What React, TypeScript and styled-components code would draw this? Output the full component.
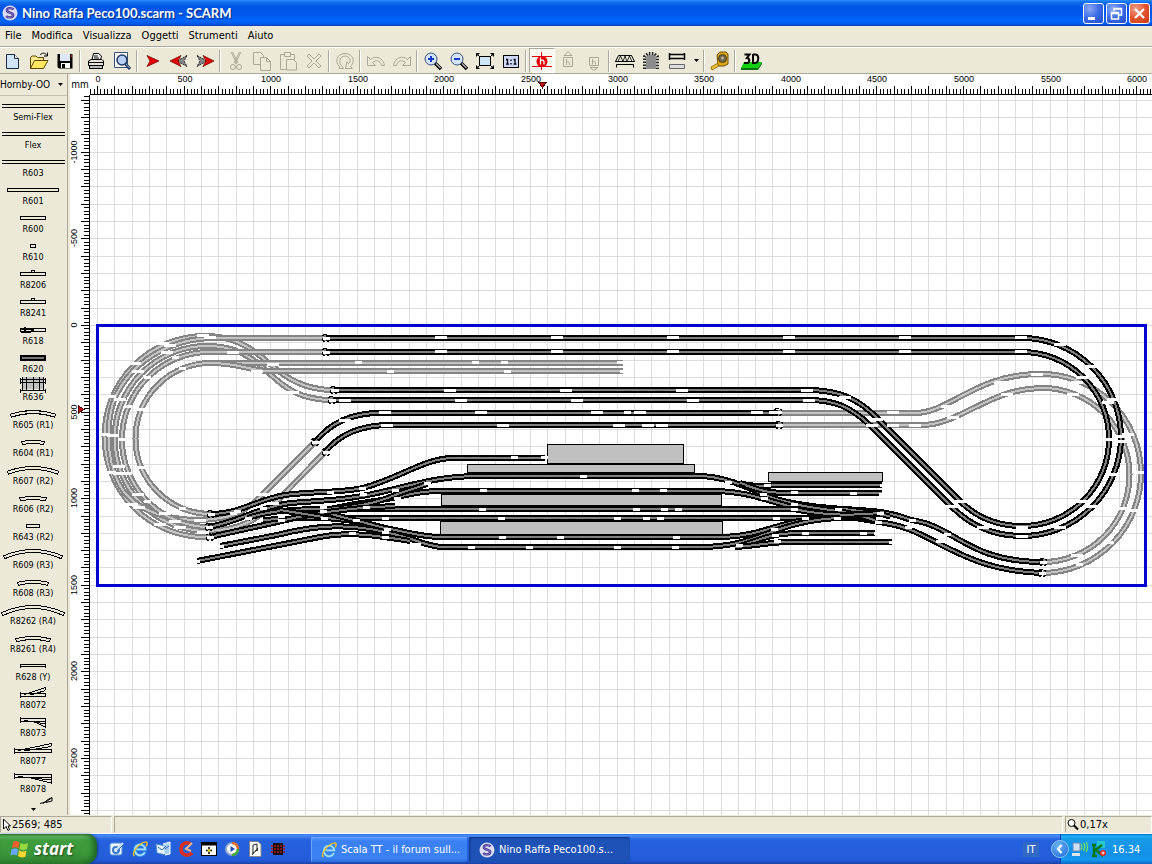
import React from "react";
import styled, { createGlobalStyle, css } from "styled-components";

const uiFont = `"DejaVu Sans Condensed", "Liberation Sans", sans-serif`;

const GlobalStyle = createGlobalStyle`
  * { box-sizing: border-box; }
  body { margin: 0; background: #ece9d8; font-family: ${uiFont}; font-size: 10px; color: #000; overflow: hidden; }
  button, select { font: inherit; color: inherit; }
  svg { flex: none; }
`;

const Window = styled.div`
  display: flex;
  flex-direction: column;
  height: 100vh;
  background: #ece9d8;
`;

/* ---------- title bar ---------- */

const TitleBar = styled.header`
  display: flex;
  align-items: center;
  gap: 4px;
  height: 26px;
  flex: none;
  padding: 0 2px;
  background: linear-gradient(#2a8cff 0, #0a68ec 3px, #0055e5 7px, #0058ea 14px, #0066ff 21px, #0057e4 24px, #0040c0 26px);
`;

const Title = styled.h1`
  flex: 1;
  margin: 0;
  font: bold 13px/20px Lato, "Open Sans", sans-serif;
  color: #fff;
  text-shadow: 1px 1px 1px #0a2a80;
`;

const CaptionButtons = styled.div`
  display: flex;
  gap: 2px;
`;

const CaptionButton = styled.button<{ $close?: boolean }>`
  width: 21px;
  height: 21px;
  padding: 0;
  border: 1px solid #fff;
  border-radius: 3px;
  background: ${(p) =>
    p.$close
      ? "radial-gradient(circle at 30% 25%, #f0a08a, #e2532c 50%, #c83c14)"
      : "radial-gradient(circle at 30% 25%, #8aa8f4, #3b6ae6 50%, #1e4cd0)"};
  svg { display: block; }
`;

/* ---------- menu ---------- */

const MenuBar = styled.nav`
  display: flex;
  gap: 10px;
  height: 21px;
  flex: none;
  padding: 0 5px;
  align-items: center;
  border-bottom: 1px solid #aca899;
`;

const MenuItem = styled.button`
  padding: 0;
  border: 0;
  background: none;
  font-size: 11px;
  line-height: 16px;
`;

/* ---------- toolbar ---------- */

const ToolBar = styled.div`
  display: flex;
  align-items: center;
  height: 27px;
  flex: none;
  border-top: 1px solid #fff;
  border-bottom: 1px solid #aca899;
`;

const ToolButton = styled.button<{ $pressed?: boolean }>`
  display: flex;
  align-items: center;
  justify-content: center;
  width: 26px;
  height: 25px;
  padding: 0;
  border: 1px solid transparent;
  background: none;
  ${(p) =>
    p.$pressed &&
    css`
      background: #f8f7f0;
      border-color: #aca899 #fff #fff #aca899;
    `}
`;

const DropButton = styled(ToolButton)`
  width: 12px;
`;

const ToolSeparator = styled.span`
  width: 2px;
  height: 22px;
  margin: 0 2px 0 1px;
  border-left: 1px solid #aca899;
  border-right: 1px solid #fff;
`;

/* ---------- work area ---------- */

const WorkArea = styled.main`
  display: grid;
  grid-template-columns: 68px 22px minmax(0, 1fr);
  grid-template-rows: 21px minmax(0, 1fr);
  flex: 1;
  min-height: 0;
`;

const Palette = styled.aside`
  grid-row: 1 / 3;
  display: flex;
  flex-direction: column;
  min-height: 0;
  border-right: 1px solid #aca899;
`;

const LibraryRow = styled.div`
  display: grid;
  align-items: center;
  flex: none;
  height: 22px;
  border-bottom: 1px solid #c5c2b3;
  > * { grid-area: 1 / 1; }
  > svg { justify-self: end; margin-right: 4px; pointer-events: none; }
`;

const LibrarySelect = styled.select`
  appearance: none;
  height: 20px;
  width: 100%;
  padding: 0;
  border: 0;
  border-radius: 0;
  background: none;
`;

const PartList = styled.ul`
  flex: 1;
  min-height: 0;
  margin: 0;
  padding: 0;
  overflow: hidden;
  list-style: none;
`;

const PartButton = styled.button`
  display: block;
  width: 66px;
  height: 28px;
  padding: 0;
  border: 0;
  background: none;
  font-size: 9px;
  line-height: 10px;
  text-align: center;
  svg { display: block; overflow: visible; }
`;

const ScrollDown = styled.button`
  display: flex;
  justify-content: center;
  height: 7px;
  padding: 0;
  border: 0;
  background: none;
`;

const UnitCorner = styled.div`
  display: flex;
  align-items: center;
  justify-content: center;
  border-left: 2px solid #ece9d8;
  background: #fff;
`;

const HorizontalRuler = styled.div`
  overflow: hidden;
  background: #fff;
  svg { display: block; width: 100%; height: 21px; }
`;

const VerticalRuler = styled.div`
  overflow: hidden;
  border-left: 2px solid #ece9d8;
  background: #fff;
  svg { display: block; width: 20px; height: 100%; }
`;

const Sheet = styled.div`
  overflow: hidden;
  background: #fff;
  svg { display: block; width: 100%; height: 100%; }
`;

const RulerText = styled.text`
  font: 9px "Liberation Sans", sans-serif;
  text-anchor: middle;
`;

/* ---------- status bar ---------- */

const StatusBar = styled.footer`
  display: grid;
  grid-template-columns: 112px minmax(0, 1fr) 87px;
  gap: 2px;
  height: 19px;
  flex: none;
  padding-top: 1px;
  border-bottom: 1px solid #fff;
`;

const StatusCell = styled.div`
  display: flex;
  align-items: center;
  gap: 1px;
  padding-left: 1px;
  border: 1px solid;
  border-color: #aca899 #fff #ece9d8 #aca899;
  font-size: 11px;
`;

/* ---------- taskbar ---------- */

const TaskBar = styled.div`
  display: flex;
  height: 30px;
  flex: none;
  background: linear-gradient(#1f5fd8 0, #4a92f6 1px, #3a7bee 3px, #2560de 6px, #245edb 22px, #2158d4 27px, #1941a5 30px);
`;

const StartButton = styled.button`
  display: flex;
  align-items: center;
  gap: 5px;
  width: 97px;
  margin-right: 8px;
  padding: 0 0 1px 10px;
  border: 0;
  border-radius: 0 10px 12px 0;
  background: linear-gradient(#2f7a2f 0, #66b866 2px, #3f9e3f 6px, #3a963a 20px, #2f802f 30px);
  box-shadow: inset -4px 0 5px #1f6a24, 1px 0 2px #143a90;
  font: italic bold 17px/24px "Open Sans", "Liberation Sans", sans-serif;
  color: #fff;
  text-shadow: 1px 1px 2px #1c4a1c;
`;

const QuickLaunch = styled.div`
  display: flex;
  align-items: center;
  width: 206px;
  flex: none;
`;

const QuickButton = styled.button`
  display: flex;
  align-items: center;
  justify-content: center;
  width: 23px;
  height: 24px;
  padding: 0;
  border: 0;
  background: none;
`;

const Tasks = styled.div`
  display: flex;
  flex: 1;
  gap: 2px;
  padding: 3px 0 2px;
`;

const TaskButton = styled.button<{ $active?: boolean }>`
  display: flex;
  align-items: center;
  gap: 4px;
  width: ${(p) => (p.$active ? 161 : 156)}px;
  padding: 0 10px;
  border: 0;
  border-radius: 2px;
  color: #fff;
  font-size: 11px;
  white-space: nowrap;
  background: ${(p) => (p.$active ? "#1e52b7" : "linear-gradient(#5a9bfb, #3c81f3 4px, #3c81f3 21px, #2f6fe0)")};
  box-shadow: ${(p) => (p.$active ? "inset 1px 1px 2px #0e3588" : "inset 1px 1px 0 #6aa6fb")};
`;

const Language = styled.button`
  align-self: center;
  width: 16px;
  margin-right: 21px;
  padding: 0;
  border: 0;
  background: #316ac5;
  color: #fff;
  font-size: 11px;
  line-height: 15px;
`;

const Tray = styled.div`
  display: flex;
  align-items: center;
  width: 92px;
  flex: none;
  gap: 2px;
  border-left: 1px solid #1042af;
  background: linear-gradient(#0c66c0 0, #1cb0f8 2px, #189ae8 5px, #1290e8 20px, #1599f0 26px, #0c66c0 30px);
  color: #fff;
  font-size: 11px;
`;

const TrayToggle = styled.button`
  width: 18px;
  height: 18px;
  margin-left: -10px;
  padding: 0;
  border: 1px solid #8cc8f4;
  border-radius: 50%;
  background: radial-gradient(circle at 40% 30%, #6cb4f6, #1a68d8);
  svg { display: block; }
`;

const Clock = styled.time`
  margin-left: 3px;
`;

/* ---------- icons ---------- */

const Svg = ({ w = 20, h = 20, children }: { w?: number; h?: number; children: React.ReactNode }) => (
  <svg width={w} height={h} viewBox={`0 0 ${w} ${h}`} fill="none" aria-hidden="true">
    {children}
  </svg>
);

const ScarmLogo = ({ size = 16 }: { size?: number }) => (
  <svg width={size} height={size} viewBox="0 0 16 16" fill="none" aria-hidden="true">
    <circle cx="8" cy="8" r="7.5" fill="#dcdcf4" />
    <path d="M11.5 4.5C10 2.6 5 2.6 4.8 5.3C4.7 8.2 11.4 7.2 11.2 10.2C11 13 5.8 13 4.3 11" stroke="#3a2c8c" strokeWidth="2.4" />
    <path d="M11.5 4.5C10 2.6 5 2.6 4.8 5.3C4.7 8.2 11.4 7.2 11.2 10.2C11 13 5.8 13 4.3 11" stroke="#c8b0e8" strokeWidth="0.6" />
  </svg>
);

const DropArrow = () => (
  <Svg w={5} h={3}>
    <path d="M0 0H5L2.5 3Z" fill="#000" />
  </Svg>
);

const Magnifier = ({ sign }: { sign: "+" | "-" }) => (
  <Svg>
    <path d="M12 12L18 18" stroke="#000" strokeWidth="3.5" />
    <path d="M13 12.5L17.5 17" stroke="#a8a8a8" strokeWidth="1.5" />
    <circle cx="8" cy="8" r="6" fill="#d4e4fc" stroke="#38507c" />
    <path d={sign === "+" ? "M5 8H11M8 5V11" : "M5 8H11"} stroke="#1838c8" strokeWidth="2" />
  </Svg>
);

const RedArrow = () => (
  <Svg>
    <path d="M4 4.5L16 10L4 15.5L7 10Z" fill="#e80000" stroke="#600" strokeWidth="0.7" />
  </Svg>
);

const PairArrows = ({ flip }: { flip?: boolean }) => (
  <Svg>
    <g transform={flip ? "matrix(-1 0 0 1 20 0)" : undefined}>
      <path d="M18 4.5L8 10L18 15.5L15 10Z" fill="#888" stroke="#222" strokeDasharray="2 1" />
      <path d="M12 4.5L1 10L12 15.5L9 10Z" fill="#e80000" stroke="#600" strokeWidth="0.7" />
    </g>
  </Svg>
);

const muted = "#aca899";

type Tool = { name: string; icon?: React.ReactNode; sep?: boolean; pressed?: boolean; drop?: boolean };

const sep: Tool = { name: "", sep: true };

const tools: Tool[] = [
  {
    name: "New",
    icon: (
      <Svg>
        <path d="M3.5 3.5H11.5L15.5 7.5V17.5H3.5Z" fill="#d0e4fc" stroke="#1c2c44" />
        <path d="M11.5 3.5V7.5H15.5" fill="#fff" stroke="#1c2c44" />
      </Svg>
    ),
  },
  {
    name: "Open",
    icon: (
      <Svg>
        <path d="M1.5 17.5V6.5L3 5H7L8.5 6.5H14.5V9.5" fill="#fbe88c" stroke="#5c4800" />
        <path d="M1.5 17.5L5.5 9.5H19L14.5 17.5Z" fill="#ffe860" stroke="#5c4800" />
        <path d="M11 4C13 1.5 16 1.5 18 4.5M18.500 1.500V5H15" stroke="#000" />
      </Svg>
    ),
  },
  {
    name: "Save",
    icon: (
      <Svg>
        <path d="M2.5 3H17.5V17.5H4L2.5 16Z" fill="#000" />
        <rect x="5" y="3" width="10" height="7" fill="#dce8f8" />
        <rect x="6" y="12" width="9" height="5" fill="#fff" />
        <rect x="7" y="13" width="3" height="4" fill="#000" />
        <rect x="16" y="4" width="1" height="2" fill="#d02020" />
      </Svg>
    ),
  },
  sep,
  {
    name: "Print",
    icon: (
      <Svg>
        <path d="M6 9L7.5 2.5H12.5L15.5 5L14.5 9" fill="#fff" stroke="#000" />
        <path d="M8 5H12M8 7H13" stroke="#000" />
        <path d="M2.5 10L5 8.5H16L17.5 10V14.5H2.5Z" fill="#e8e4d8" stroke="#000" />
        <path d="M2 11.5H18" stroke="#000" />
        <rect x="3.5" y="14.5" width="13" height="3" fill="#bbb" stroke="#000" />
      </Svg>
    ),
  },
  {
    name: "Preview",
    icon: (
      <Svg>
        <path d="M2.5 1.5H15.500V16.500H2.500Z" fill="#fff" stroke="#385078" />
        <circle cx="10" cy="9" r="5" fill="#b8d0f4" stroke="#203860" strokeWidth="1.5" />
        <path d="M13.5 13L18 18" stroke="#203860" strokeWidth="3" />
        <path d="M14 13L17.5 17" stroke="#88a4cc" />
      </Svg>
    ),
  },
  sep,
  { name: "Start", icon: <RedArrow /> },
  { name: "Previous", icon: <PairArrows /> },
  { name: "Next", icon: <PairArrows flip /> },
  sep,
  {
    name: "Cut",
    icon: (
      <Svg>
        <path d="M5 1L11 13M15 1L9 13M6.500 1L12 12M13.500 1L8 12" stroke={muted} />
        <circle cx="7" cy="16" r="2.5" stroke={muted} />
        <circle cx="13" cy="16" r="2.5" stroke={muted} />
      </Svg>
    ),
  },
  {
    name: "Copy",
    icon: (
      <Svg>
        <path d="M1.5 1.5H8.5L11.5 4.5V13.5H1.5Z" fill="#ece9d8" stroke={muted} />
        <path d="M8.5 6.5H14.5L18.5 10.5V19.5H8.5Z" fill="#ece9d8" stroke={muted} />
        <path d="M14.5 6.5V10.5H18.5" stroke={muted} />
      </Svg>
    ),
  },
  {
    name: "Paste",
    icon: (
      <Svg>
        <path d="M2.5 3.5H16.5V18.5H2.5Z" stroke={muted} />
        <path d="M6.5 1.5H12.5V5.5H6.5Z" fill="#ece9d8" stroke={muted} />
        <path d="M8.5 8.5H15.5L18.5 11.5V19H8.5Z" fill="#ece9d8" stroke={muted} />
      </Svg>
    ),
  },
  {
    name: "Delete",
    icon: (
      <Svg>
        <path d="M3 5L5 3L10 8L15 3L17 5L12 10L17 15L15 17L10 12L5 17L3 15L8 10Z" stroke={muted} />
      </Svg>
    ),
  },
  sep,
  {
    name: "Rotate",
    icon: (
      <Svg>
        <path d="M4 17.5H8.500L7.500 15.500C3.500 13.500 3.500 5.500 10 5C15.500 5.500 16.500 11 13.500 13L12 10.500L10.500 17.500H17.500L15.500 15.500C20.500 11 18.500 2.500 10 2.500C1.500 2.500 -0.500 11.500 4.500 15.500Z" stroke={muted} />
      </Svg>
    ),
  },
  sep,
  {
    name: "Undo",
    icon: (
      <Svg>
        <path d="M1.5 5.5V14.5H9.5L6.5 11.5C10 8.5 14 9 15.5 14.5H18.5C17.5 6.5 9 4 4.5 8.5Z" stroke={muted} />
      </Svg>
    ),
  },
  {
    name: "Redo",
    icon: (
      <Svg>
        <path d="M18.5 5.5V14.5H10.5L13.5 11.5C10 8.5 6 9 4.5 14.5H1.5C2.5 6.5 11 4 15.5 8.5Z" stroke={muted} />
      </Svg>
    ),
  },
  sep,
  { name: "Zoom in", icon: <Magnifier sign="+" /> },
  { name: "Zoom out", icon: <Magnifier sign="-" /> },
  {
    name: "Fit",
    icon: (
      <Svg>
        <rect x="4.5" y="5.5" width="11" height="9" fill="#cfe4f4" stroke="#000" />
        <path d="M1 2L5 2L1 6ZM19 2L15 2L19 6ZM1 18L5 18L1 14ZM19 18L15 18L19 14Z" fill="#000" />
        <path d="M2 3L5 6M18 3L15 6M2 17L5 14M18 17L15 14" stroke="#000" />
      </Svg>
    ),
  },
  {
    name: "Actual size",
    icon: (
      <Svg>
        <rect x="2.5" y="4.5" width="15" height="12" fill="#cfd8fc" stroke="#000" />
        <path d="M5 8.5H6.5V13M12.500 8.500H14V13M5 13.200H8M12.500 13.200H15.500" stroke="#000" strokeWidth="1.3" />
        <path d="M10 8.5V10M10 12V13.500" stroke="#000" strokeWidth="1.3" />
      </Svg>
    ),
  },
  sep,
  {
    name: "Heights",
    pressed: true,
    icon: (
      <Svg>
        <path d="M0 5.5H20M0 15.5H20M9.5 1V19" stroke="#e80000" />
        <circle cx="10" cy="10.5" r="5.5" fill="#e80000" />
        <path d="M8.5 6.5V13.5M8.500 10C10 8.500 12 9 12 11V13.500" stroke="#fff" strokeWidth="1.3" />
      </Svg>
    ),
  },
  {
    name: "Raise",
    icon: (
      <Svg>
        <path d="M10 0.5L14 4.5H6ZM5.500 6.500H14.500V15.500H5.500Z" stroke={muted} />
        <path d="M8.5 8V14M8.500 11.500C10 10 11.500 10.500 11.500 14" stroke={muted} />
      </Svg>
    ),
  },
  {
    name: "Lower",
    icon: (
      <Svg>
        <path d="M10 19.5L14 16.5H6ZM5.500 6.500H14.500V14.500H5.500Z" stroke={muted} />
        <path d="M8.5 8V13.5M8.500 11C10 9.500 11.500 10 11.500 13.500" stroke={muted} />
      </Svg>
    ),
  },
  sep,
  {
    name: "Bridge",
    icon: (
      <Svg>
        <path d="M0 10.5H20M1.500 16.500V13.500H18.500V16.500M0.500 10.500L3.500 4.500H16.500L19.500 10.500" stroke="#000" />
        <path d="M3 10.5L5.500 5L8 10.500L10 5L12 10.500L14.500 5L17 10.500" stroke="#000" strokeWidth="0.8" />
      </Svg>
    ),
  },
  {
    name: "Tunnel",
    icon: (
      <Svg>
        <path d="M5 18V6C6 3 14 3 15 6V18Z" fill="#8c8c8c" />
        <path d="M3.5 18V5.500L7 2.500H13L16.500 5.500V18" stroke="#222" strokeWidth="3" strokeDasharray="1.500 1.500" />
      </Svg>
    ),
  },
  {
    name: "Levels",
    icon: (
      <Svg>
        <path d="M2 3.500H18M2 7.500H18M2.500 2V9M17.500 2V9" stroke="#000" strokeWidth="1.500" />
        <path d="M2.5 13.5H17.5V17.5H2.5Z" fill="#ddd" stroke="#666" />
      </Svg>
    ),
  },
  { name: "Level list", drop: true, icon: <DropArrow /> },
  sep,
  {
    name: "Measure",
    icon: (
      <Svg>
        <path d="M7 4L10 1H16L18 3V13L14 15H8Z" fill="#e0a810" stroke="#705000" />
        <circle cx="12.5" cy="7.5" r="4" fill="#706850" stroke="#504010" />
        <circle cx="12.5" cy="7" r="1.5" fill="#b8b098" />
        <path d="M1 16L8 12V15.500L2 19Z" fill="#f0c040" stroke="#a07800" />
      </Svg>
    ),
  },
  sep,
  {
    name: "3D view",
    icon: (
      <Svg w={22}>
        <path d="M1 17L4 11H22L18 17Z" fill="#10d010" />
        <path d="M1 17L18 17L22 11V13L18 19H1Z" fill="#087008" />
        <path d="M4.5 3.500H9.500L7 7C10 7 10 12 7 12H4" stroke="#000" strokeWidth="2" />
        <path d="M13 3V12H15C19 12 19.500 3.500 15.500 3.500H13" stroke="#000" strokeWidth="2" />
      </Svg>
    ),
  },
];

/* ---------- palette of track parts ---------- */

type Shape = "long" | "bar" | "feeder" | "rerail" | "buffer" | "crossing" | "arc" | "bracket" | "left" | "right";
type Part = { label: string; shape: Shape; half: number };

const parts: Part[] = [
  { label: "Semi-Flex", shape: "long", half: 31 },
  { label: "Flex", shape: "long", half: 31 },
  { label: "R603", shape: "long", half: 31 },
  { label: "R601", shape: "bar", half: 26 },
  { label: "R600", shape: "bar", half: 13 },
  { label: "R610", shape: "bar", half: 3 },
  { label: "R8206", shape: "feeder", half: 13 },
  { label: "R8241", shape: "feeder", half: 13 },
  { label: "R618", shape: "rerail", half: 13 },
  { label: "R620", shape: "buffer", half: 13 },
  { label: "R636", shape: "crossing", half: 13 },
  { label: "R605 (R1)", shape: "arc", half: 23 },
  { label: "R604 (R1)", shape: "arc", half: 12 },
  { label: "R607 (R2)", shape: "arc", half: 26 },
  { label: "R606 (R2)", shape: "arc", half: 14 },
  { label: "R643 (R2)", shape: "bar", half: 7 },
  { label: "R609 (R3)", shape: "arc", half: 30 },
  { label: "R608 (R3)", shape: "arc", half: 16 },
  { label: "R8262 (R4)", shape: "arc", half: 32 },
  { label: "R8261 (R4)", shape: "arc", half: 18 },
  { label: "R628 (Y)", shape: "bracket", half: 13 },
  { label: "R8072", shape: "left", half: 13 },
  { label: "R8073", shape: "right", half: 13 },
  { label: "R8077", shape: "left", half: 19 },
  { label: "R8078", shape: "right", half: 19 },
];

const PartDrawing = ({ shape, half }: { shape: Shape; half: number }) => {
  const l = 33.5 - half;
  const r = 32.5 + half;
  const bar = `M${l} 6.5H${r}V9.5H${l}Z`;
  const sag = half * half * 0.007;
  const top = half > 28 ? 3.5 : half > 20 ? 4.5 : 6.5;
  return (
    <svg width="66" height="14" stroke="#000" fill="none" shapeRendering="crispEdges" aria-hidden="true">
      {shape === "long" && <path d="M2 6.500H65M2 9.500H65" />}
      {shape === "bar" && <path d={bar} />}
      {shape === "feeder" && <path d={`${bar}M31.5 6.5V4.5H34.5V6.5`} />}
      {shape === "rerail" && (
        <>
          <path d={bar} />
          <path d="M21 6.500H31M21 10H31M25 5V11M31 8H34" strokeWidth="2" />
        </>
      )}
      {shape === "buffer" && <rect x={l + 0.5} y="6" width={r - l - 1} height="4" fill="#777" strokeWidth="2" />}
      {shape === "crossing" && (
        <>
          <rect x="22" y="-1" width="22" height="12" fill="#c0c0c0" stroke="none" />
          <path d="M20 1.500H46M20 4.500H46M20.500 0V6M45.500 0V6M20.500 11V15M45.500 11V15M20 12.500H46M22.500 -1V12M26.500 -1V12M33.500 -1V12M39.500 -1V12M43.500 -1V12" />
        </>
      )}
      {shape === "arc" && (
        <path
          d={`M${l} ${top + sag}Q33 ${top - sag} ${r} ${top + sag}L${r - 1} ${top + sag + 3}Q33 ${top - sag + 3} ${l + 1} ${top + sag + 3}Z`}
        />
      )}
      {shape === "bracket" && <path d={`M${l} 10V6.5H${r}V10M${l} 8.5H${r}`} />}
      {shape === "left" && <path d={`M${l} 6V12M${l} 7.5H${r}M${l} 10.5H${r}V7M${l + 4} 8.500L${r} 1.500V4M${l + 10} 9L${r} 4.500`} />}
      {shape === "right" && <path d={`M${l} 3V9M${l} 4.5H${r}V9M${l} 7.5H${r}M${l + 4} 6.500L${r} 10M${l + 12} 7L${r} 13V9`} />}
    </svg>
  );
};

/* ---------- rulers ---------- */

const PX_PER_MM = 0.1732;
const range = (from: number, to: number, step: number) =>
  Array.from({ length: Math.floor((to - from) / step) + 1 }, (_, i) => from + i * step);

const ORIGIN_X = 7;
const ORIGIN_Y = 230;
const atX = (mm: number) => ORIGIN_X + Math.round(mm * PX_PER_MM);
const atY = (mm: number) => ORIGIN_Y + Math.round(mm * PX_PER_MM);

const topTicks = range(-40, 12000, 20)
  .map((mm) => `M${atX(mm) + 0.5} 20V${mm % 100 === 0 ? 12 : 15}`)
  .join("");
const sideTicks = range(-1320, 6000, 20)
  .map((mm) => `M20 ${atY(mm) + 0.5}H${mm % 100 === 0 ? 11 : 14}`)
  .join("");
const gridLines =
  range(0, 12000, 100)
    .map((mm) => `M${atX(mm) + 0.5} 0V4000`)
    .join("") +
  range(-1300, 6000, 100)
    .map((mm) => `M0 ${atY(mm) + 0.5}H4000`)
    .join("");

/* ---------- layout drawing ---------- */

const hiddenTracks = [
  "M334 390C304 390 286 378 270 364C248 344 230 336 205 336A100 100 0 0 0 205 537H210",
  "M333 400C300 400 285 388 270 374C250 354 232 346 207 346A92 92 0 0 0 207 531C240 530 254 521 272 506L325 452",
  "M326 338H215C170 338 130 362 114 400C104 430 108 470 124 492C144 516 176 520 200 520C232 519 245 512 260 497L315 442",
  "M326 352H210A87 87 0 0 0 209 527",
  "M623 363H211A75 75 0 0 0 211 514",
  "M623 371H270C250 371 240 363 211 363",
  "M778 413H915C950 413 975 374 1040 374A99 99 0 0 1 1043 573",
  "M778 425H922C960 425 990 388 1042 388A87 87 0 0 1 1043 562",
];

const visibleTracks = [
  "M326 338H1022A99 99 0 0 1 1022 536C994 536 972 527 952 507L872 427C850 406 834 400 808 400H333",
  "M326 352H1022A87 87 0 0 1 1022 526C998 526 978 519 960 501L878 419C858 398 838 390 807 390H334",
  "M315 442Q338 413 380 413H778",
  "M325 452Q347 425 390 425H778",
  "M211 514C240 514 255 500 285 495C315 491 340 493 363 488C400 478 425 458 453 458H545",
  "M208 527C240 522 255 508 290 503C330 500 350 500 390 490C430 480 450 476 480 476H698C722 476 745 486 765 495S820 508 860 510S905 520 917 521C955 528 970 562 1043 562",
  "M210 537C240 530 290 520 323 511S370 503 397 497S430 491 450 491H715C745 491 765 500 793 507S860 518 890 524C935 532 960 570 1042 573",
  "M248 518C270 510 300 509 323 509H837C860 509 870 514 890 516",
  "M263 520C290 518 310 518 323 518H878",
  "M323 509C350 508 375 504 395 495L427 484",
  "M323 518C355 519 375 526 395 530S425 537 440 537H723C760 536 775 524 805 520S850 518 880 514",
  "M220 546L277 535C320 524 350 524 385 532S410 540 430 545L440 547H700C760 547 770 522 837 518",
  "M197 561L320 537C350 531 380 536 410 541",
  "M323 512L385 528",
  "M280 521C320 512 350 508 395 506",
  "M280 510L323 517",
  "M740 483C755 488 765 485 790 485H882",
  "M745 485C760 490 765 493 790 493H882",
  "M740 546C760 540 770 533 800 533H875",
  "M735 547C755 546 770 542 790 542H892",
  "M794 504C820 510 850 510 879 522",
  "M794 509C820 515 850 516 880 513",
];

const platforms = [
  [547, 444, 136, 19],
  [467, 464, 227, 8],
  [441, 494, 280, 11],
  [440, 521, 282, 13],
  [768, 472, 114, 9],
];

const pairs = (text: string) => text.split(" ").map((p) => p.split(",").map(Number));

const wideJoints = pairs(
  "441,337 557,337 673,337 789,337 905,337 1021,337 441,351 557,351 673,351 789,351 905,351 1021,351 450,390 566,390 682,390 807,390 345,400 461,400 577,400 693,400 809,400 385,412 481,412 597,412 640,412 757,412 387,425 503,425 619,425 648,425 662,425 893,412 893,425 915,425 " +
    "203,335 210,337 163,343 170,345 167,352 135,363 138,371 110,396 120,399 104,434 113,435 119,466 110,472 119,473 138,494 132,504 139,507 165,513 160,524 175,521 180,527 200,520 203,532 233,352 273,364 257,371 293,392 345,420 262,494 273,503 " +
    "1060,344 1092,366 1082,377 1077,382 1113,399 1108,402 1128,434 1120,436 1122,441 1108,439 1138,472 1113,474 1083,501 1092,506 1123,508 1131,510 1060,527 1022,527 1022,536 983,527 960,501 951,506 1077,555 1037,374 1007,394 1000,382 1073,394 947,406 953,417 845,397 877,419 872,425"
);

const shortJoints = pairs(
  "335,390 627,412 772,412 514,457 544,457 583,476 483,490 635,490 663,490 482,509 636,509 664,509 678,509 794,509 838,509 385,518 501,518 617,518 646,518 660,518 776,518 805,518 837,518 879,518 502,537 560,537 676,537 471,547 529,547 617,547 675,547 739,545 427,483 395,490 397,498 387,529 385,537 417,544 " +
    "728,482 767,485 763,494 764,498 794,492 853,493 883,485 882,494 794,504 880,513 878,522 912,520 908,527 774,529 775,535 777,541 805,533 863,533 877,533 892,542 330,492 362,488 363,494 366,507 323,507 323,511 324,518 356,520 352,533 385,532 281,516 281,520 263,508 248,518 237,511 233,513 220,546 196,561 " +
    "128,406 141,409 147,377 182,368 122,439 128,473 141,467 147,501 182,508 175,357 358,362 390,371 475,362 504,362 507,371 620,362 623,371 1110,542 1079,564 947,534 939,541"
);

const levelMarks = pairs("326,338 326,352 334,390 332,400 315,442 326,452 211,514 209,527 210,537 778,412 779,425 1043,562 1042,573");

const Tracks = ({ paths, rail, bed }: { paths: string[]; rail: string; bed: string }) => (
  <g fill="none">
    {paths.map((d) => (
      <g key={d}>
        <path d={d} stroke={rail} strokeWidth="6" />
        <path d={d} stroke={bed} strokeWidth="2" />
      </g>
    ))}
  </g>
);

const LayoutDrawing = () => (
  <svg shapeRendering="crispEdges" role="img" aria-label="Track plan">
    <path d={gridLines} stroke="#dcdcdc" />
    <g transform="translate(-90 -95)">
      <Tracks paths={hiddenTracks} rail="#848484" bed="#c4c4c4" />
      {platforms.map(([x, y, w, h]) => (
        <rect key={`${x} ${y}`} x={x + 0.5} y={y + 0.5} width={w} height={h} fill="#c0c0c0" stroke="#000" />
      ))}
      <Tracks paths={visibleTracks} rail="#000" bed="#808080" />
      {levelMarks.map(([x, y]) => (
        <circle key={`${x} ${y}`} cx={x} cy={y} r="4" fill="none" stroke="#000" strokeDasharray="5 2" />
      ))}
      <g fill="#fff">
        {wideJoints.map(([x, y], i) => (
          <rect key={i} x={x - 6} y={y - 1} width="12" height="3" />
        ))}
        {shortJoints.map(([x, y], i) => (
          <rect key={i} x={x - 3} y={y - 1} width="7" height="3" />
        ))}
        {levelMarks.map(([x, y], i) => (
          <rect key={i} x={x - 3} y={y - 1} width="7" height="3" />
        ))}
      </g>
      <rect x="97.5" y="325.5" width="1048" height="260" fill="none" stroke="#0000d0" strokeWidth="3" />
    </g>
  </svg>
);

/* ---------- taskbar icons ---------- */

const Explorer = ({ size = 18 }: { size?: number }) => (
  <svg width={size} height={size} viewBox="0 0 18 18" fill="none" aria-hidden="true">
    <path d="M14.5 12.5A6 6 0 1 1 15 9.500H5" stroke="#2c8ce8" strokeWidth="4" />
    <path d="M14.5 12.5A6 6 0 1 1 15 9.500H5" stroke="#a4dcfc" strokeWidth="2" />
    <path d="M2.500 17C-1 13 9 1 16 1C18 2 17 4 16 6" stroke="#f4c028" strokeWidth="1.6" />
  </svg>
);

const quickIcons: { name: string; icon: React.ReactNode }[] = [
  {
    name: "Desktop",
    icon: (
      <Svg w={16} h={16}>
        <rect x="1" y="2" width="12" height="12" rx="2" fill="#e8f4fc" stroke="#5890d0" />
        <circle cx="7" cy="9" r="3" stroke="#3878c8" strokeWidth="2" />
        <path d="M7 9L14 2" stroke="#c8e0f8" strokeWidth="2" />
        <path d="M8 10L15 3" stroke="#3878c8" />
      </Svg>
    ),
  },
  { name: "Internet Explorer", icon: <Explorer size={16} /> },
  {
    name: "Mail",
    icon: (
      <Svg w={16} h={16}>
        <path d="M1 3L11 5V14L2 12Z" fill="#e8f4fc" stroke="#4888c8" />
        <path d="M8 3L15 1V13L10 14" fill="#a8d0f4" stroke="#fff" />
        <path d="M3 6L7 9L11 5M10 8L14 5" stroke="#2868b0" />
      </Svg>
    ),
  },
  {
    name: "Cleaner",
    icon: (
      <Svg w={16} h={16}>
        <path d="M13 4C10 0 3 2 3 8C3 14 10 16 14 12" stroke="#d83020" strokeWidth="3.5" />
        <path d="M14 2L8 8L13 10" stroke="#e8b090" strokeWidth="2" />
      </Svg>
    ),
  },
  {
    name: "Console",
    icon: (
      <Svg w={16} h={16}>
        <rect x="0.5" y="1.5" width="15" height="13" fill="#fff" stroke="#000" />
        <path d="M0 3H16" stroke="#000" strokeWidth="3" />
        <path d="M8 6V13M5 9.500H11" stroke="#000" strokeWidth="1.5" />
        <circle cx="8" cy="9.5" r="1.5" fill="#e8d020" />
      </Svg>
    ),
  },
  {
    name: "Media Player",
    icon: (
      <Svg w={16} h={16}>
        <circle cx="8" cy="8" r="6" fill="#fff" stroke="#90a8c8" strokeWidth="2" />
        <path d="M8 2A6 6 0 0 1 14 8" stroke="#e87028" strokeWidth="2.5" />
        <path d="M14 8A6 6 0 0 1 8 14" stroke="#48a838" strokeWidth="2.5" />
        <path d="M6.5 5L11 8L6.500 11Z" fill="#1850b8" />
      </Svg>
    ),
  },
  {
    name: "Notes",
    icon: (
      <Svg w={16} h={16}>
        <path d="M2.5 0.5H11L14 3.5V15.5H2.5Z" fill="#fff" stroke="#888" />
        <path d="M6 4L10 3V10M6 4V12M5 12H7M8 10L11 9M5 14L11 7" stroke="#222" />
      </Svg>
    ),
  },
  {
    name: "Chip",
    icon: (
      <Svg w={16} h={16}>
        <rect x="3" y="2" width="10" height="12" fill="#181010" />
        <path d="M1 5H15M1 8H15M1 11H15" stroke="#a81818" strokeWidth="1.5" strokeDasharray="2 1" />
      </Svg>
    ),
  },
];

export default function App() {
  return (
    <Window>
      <GlobalStyle />
      <TitleBar>
        <ScarmLogo />
        <Title>Nino Raffa Peco100.scarm - SCARM</Title>
        <CaptionButtons>
          <CaptionButton aria-label="Minimize">
            <Svg w={19} h={19}>
              <rect x="4" y="13" width="7" height="3" fill="#fff" />
            </Svg>
          </CaptionButton>
          <CaptionButton aria-label="Restore">
            <Svg w={19} h={19}>
              <path d="M7 7V4.500H14.500V11H12M7 5H14.500" stroke="#fff" strokeWidth="1.5" />
              <path d="M4.5 8.500H11.500V15H4.500ZM4.500 9.500H11.500" stroke="#fff" strokeWidth="1.5" />
            </Svg>
          </CaptionButton>
          <CaptionButton $close aria-label="Close">
            <Svg w={19} h={19}>
              <path d="M5 5L14 14M14 5L5 14" stroke="#fff" strokeWidth="2.2" />
            </Svg>
          </CaptionButton>
        </CaptionButtons>
      </TitleBar>
      <MenuBar>
        {["File", "Modifica", "Visualizza", "Oggetti", "Strumenti", "Aiuto"].map((m) => (
          <MenuItem key={m}>{m}</MenuItem>
        ))}
      </MenuBar>
      <ToolBar role="toolbar">
        {tools.map((t, i) =>
          t.sep ? (
            <ToolSeparator key={i} />
          ) : t.drop ? (
            <DropButton key={i} aria-label={t.name}>
              {t.icon}
            </DropButton>
          ) : (
            <ToolButton key={i} $pressed={t.pressed} aria-label={t.name}>
              {t.icon}
            </ToolButton>
          )
        )}
      </ToolBar>
      <WorkArea>
        <Palette>
          <LibraryRow>
            <LibrarySelect aria-label="Track library" defaultValue="Hornby-OO">
              <option>Hornby-OO</option>
            </LibrarySelect>
            <DropArrow />
          </LibraryRow>
          <PartList>
            {parts.map((p) => (
              <li key={p.label}>
                <PartButton>
                  <PartDrawing shape={p.shape} half={p.half} />
                  {p.label}
                </PartButton>
              </li>
            ))}
            <li>
              <svg width="66" height="14" stroke="#000" fill="none" aria-hidden="true">
                <path d="M40 7.500L46 6L52 1.500M43 7.500L48 3.500L52 1.500V5L46 6.500" />
              </svg>
            </li>
          </PartList>
          <ScrollDown aria-label="More parts">
            <DropArrow />
          </ScrollDown>
        </Palette>
        <UnitCorner>mm</UnitCorner>
        <HorizontalRuler>
          <svg shapeRendering="crispEdges">
            <path d={topTicks} stroke="#000" />
            <path d="M0 20.500H4000" stroke="#000" />
            {range(0, 6000, 500).map((mm) => (
              <RulerText key={mm} x={atX(mm) + 1} y="8">
                {mm}
              </RulerText>
            ))}
            <path d="M449 8.500H456L452.500 14Z" fill="#c01010" stroke="#500" />
          </svg>
        </HorizontalRuler>
        <VerticalRuler>
          <svg shapeRendering="crispEdges">
            <path d={sideTicks} stroke="#000" />
            <path d="M19.500 0V4000" stroke="#000" />
            {range(-1000, 2500, 500).map((mm) => (
              <RulerText key={mm} transform={`translate(7 ${atY(mm)}) rotate(-90)`}>
                {mm}
              </RulerText>
            ))}
            <path d="M8.500 311V318L14 314.500Z" fill="#c01010" stroke="#500" />
          </svg>
        </VerticalRuler>
        <Sheet>
          <LayoutDrawing />
        </Sheet>
      </WorkArea>
      <StatusBar>
        <StatusCell>
          <Svg w={9} h={13}>
            <path d="M1.5 1V11L4 8.500L6 12.500L7.500 11.500L6 8H8.500Z" fill="#fff" stroke="#000" />
          </Svg>
          2569; 485
        </StatusCell>
        <StatusCell />
        <StatusCell>
          <Svg w={12} h={13}>
            <circle cx="4.5" cy="5" r="3.5" fill="#fff" stroke="#000" />
            <path d="M7 7.500L11 11.500" stroke="#000" strokeWidth="2" />
          </Svg>
          0,17x
        </StatusCell>
      </StatusBar>
      <TaskBar>
        <StartButton>
          <Svg w={19} h={18}>
            <path d="M3 2C5 0.500 7 0.500 9.500 2.500L8.500 8.500C6 6.500 4 7 2 8Z" fill="#f0602c" />
            <path d="M10.500 3C13 4.500 15 4.500 18 3L17 9C14 10.500 12 10.500 9.500 9Z" fill="#98d840" />
            <path d="M1.500 9.500C4 8 6 8 8 9.500L7 15.500C5 14 3 14 0.500 15.500Z" fill="#68a8fc" />
            <path d="M9 10C11 12 14 12 16.500 10.500L15.500 16.500C13 18 10 17.500 8 16Z" fill="#fcd430" />
          </Svg>
          start
        </StartButton>
        <QuickLaunch>
          {quickIcons.map((q) => (
            <QuickButton key={q.name} aria-label={q.name}>
              {q.icon}
            </QuickButton>
          ))}
        </QuickLaunch>
        <Tasks>
          <TaskButton>
            <Explorer size={16} />
            Scala TT - il forum sull...
          </TaskButton>
          <TaskButton $active>
            <ScarmLogo size={16} />
            Nino Raffa Peco100.s...
          </TaskButton>
        </Tasks>
        <Language>IT</Language>
        <Tray>
          <TrayToggle aria-label="Show hidden icons">
            <Svg w={16} h={16}>
              <path d="M9.5 4L6 8L9.500 12" stroke="#fff" strokeWidth="2" />
            </Svg>
          </TrayToggle>
          <Svg w={18} h={16}>
            <rect x="2" y="2" width="7" height="8" fill="#cfe0f4" stroke="#6888b8" />
            <rect x="1" y="12" width="8" height="3" fill="#dce4ec" />
            <path d="M10 3Q12 6 10 9M12.500 2Q15 6 12.500 10M15 1Q18 6 15 11" stroke="#70e060" strokeWidth="1.3" />
          </Svg>
          <Svg w={16} h={18}>
            <path d="M6 1H14V8H6Z" fill="#28c8d0" />
            <path d="M3 4V16M3 11L11 5M5 10L12 16M1 5H5M1 16H6" stroke="#087818" strokeWidth="2.5" />
            <circle cx="12" cy="13" r="3" fill="#e02828" />
            <path d="M10.5 13H13.500M12 11.500V14.500" stroke="#fff" />
          </Svg>
          <Clock>16.34</Clock>
        </Tray>
      </TaskBar>
    </Window>
  );
}
